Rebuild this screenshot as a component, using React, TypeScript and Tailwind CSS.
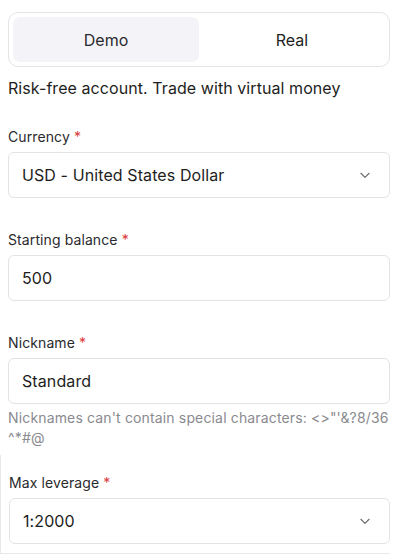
import React from "react";

const Chevron = () => (
  <svg width="14" height="14" viewBox="0 0 24 24" fill="none" stroke="#6b6b70" strokeWidth="2" strokeLinecap="round" strokeLinejoin="round">
    <path d="M5 9l7 7 7-7" />
  </svg>
);

const Label = ({ text }: { text: string }) => (
  <div className="h-5 text-[14px] leading-5 text-[#2a2a2e] tracking-[0.1px]">
    {text} <span className="text-[#d83a3a]">*</span>
  </div>
);

const Box = ({ value, select }: { value: string; select?: boolean }) => (
  <div className="mt-[5px] h-[46px] rounded-[6px] border border-[#e3e3e6] bg-white flex items-center justify-between pl-[13px] pr-[17px]">
    <span className="text-[16px] text-[#1e1e22] tracking-[0.1px]">{value}</span>
    {select && <Chevron />}
  </div>
);

export default function App() {
  return (
    <div
      className="w-[400px] h-[557px] bg-white overflow-hidden"
      style={{ fontFamily: "Inter, 'Noto Sans', sans-serif" }}
    >
      <div className="pl-2 pr-[10px] pt-3">
        <div className="h-[55px] rounded-[10px] border border-[#e4e4e7] p-1 grid grid-cols-2">
          <div className="rounded-[7px] bg-[#f4f4f8] flex items-center justify-center text-[16px] text-[#2a2a2e]">
            Demo
          </div>
          <div className="flex items-center justify-center text-[16px] text-[#1e1e22]">Real</div>
        </div>
        <div className="mt-[9px] h-6 text-[16px] leading-6 text-[#1e1e22] tracking-[0.07px]">
          Risk-free account. Trade with virtual money
        </div>

        <div className="mt-[27px]">
          <Label text="Currency" />
          <Box value="USD - United States Dollar" select />
        </div>

        <div className="mt-[32px]">
          <Label text="Starting balance" />
          <Box value="500" />
        </div>

        <div className="mt-[32px]">
          <Label text="Nickname" />
          <Box value="Standard" />
          <div className="mt-1 text-[14px] leading-5 text-[#8a8a8f] tracking-[0.15px]">
            Nicknames can't contain special characters: &lt;&gt;"'&amp;?8/36
            <br />
            ^*#@
          </div>
        </div>

        <div className="-ml-2 pl-2 border-l border-b border-[#e8e8ea] mt-[7px] pt-[18px] pb-[9px]">
          <Label text="Max leverage" />
          <Box value="1:2000" select />
        </div>
      </div>
    </div>
  );
}
